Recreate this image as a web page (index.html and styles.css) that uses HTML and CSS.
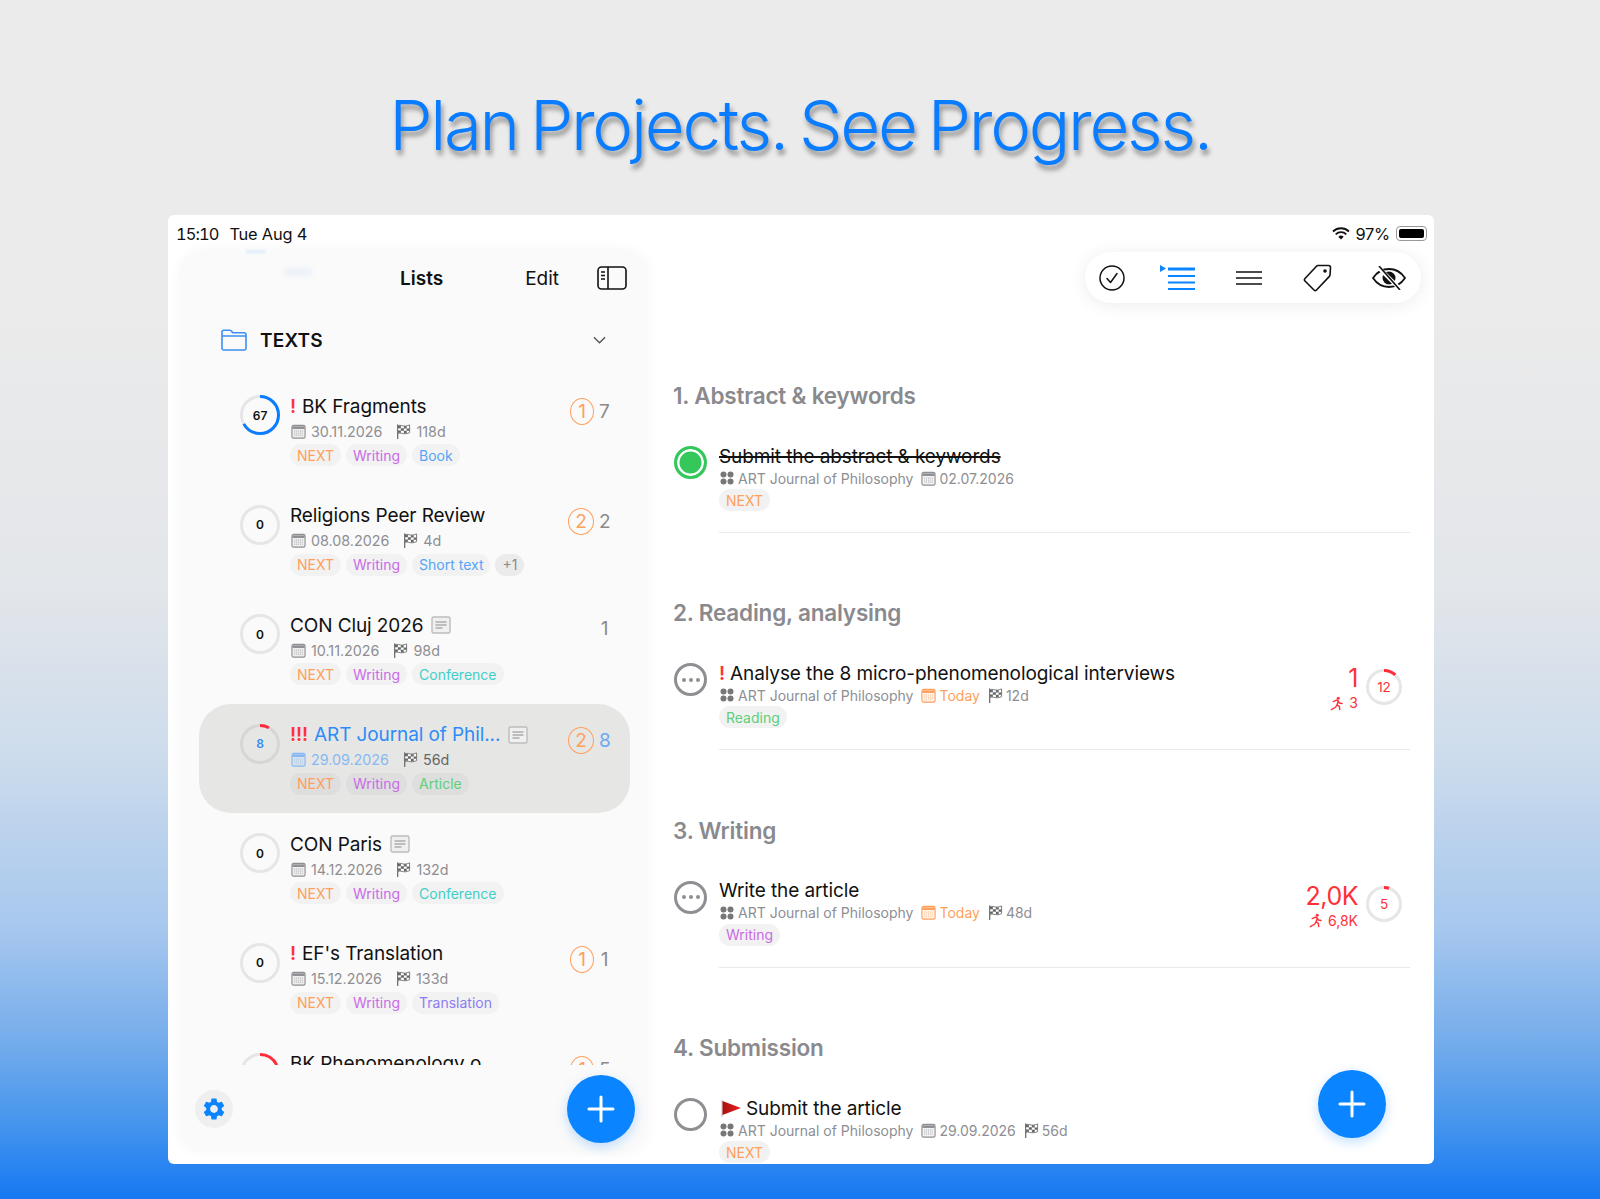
FILE: index.html
```html
<!DOCTYPE html>
<html lang="en">
<head>
<meta charset="UTF-8">
<title>Plan Projects. See Progress.</title>
<link rel="stylesheet" href="styles.css">
</head>
<body>

<!-- icons -->
<svg class="defs" aria-hidden="true">
  <defs>
    <linearGradient id="red-flag" x1="0" x2="1" y1="0" y2="0">
      <stop offset="0" stop-color="#a80f0f"/>
      <stop offset="1" stop-color="#ee2222"/>
    </linearGradient>
  </defs>
  <symbol id="i-cal" viewBox="0 0 16 16">
    <rect x="1" y="1.500" width="14" height="13.500" rx="1.800" fill="currentColor" fill-opacity=".1" stroke="currentColor" stroke-width="1.200"/>
    <path d="M1.500 2.500h13V5.300h-13z" fill="currentColor"/>
    <path d="M3.500 7.500h9M3.500 9.700h9M3.500 11.900h9" stroke="currentColor" stroke-width="1" stroke-dasharray="1 1" opacity=".75"/>
  </symbol>
  <symbol id="i-flag" viewBox="0 0 16 16">
    <path d="M1.800 1v14.500" stroke="currentColor" stroke-width="1.300" stroke-linecap="round"/>
    <path d="M1.800 1.800c3.200-1.200 5.500.9 8.500.4 1.700-.3 3-.8 4.200-1.200v8.200c-1.200.4-2.500 1-4.200 1.200-3 .4-5.300-1.500-8.500-.4z" fill="#fff" stroke="currentColor" stroke-width=".9"/>
    <path d="M2 2h3.200v2.500H2zM8.400 2.300h3v2.600h-3zM5.200 4.500h3.200v2.600H5.200zM11.400 4.700h3v2.500h-3zM2 7h3.200v2.400H2zM8.400 7.100h3v2.700h-3z" fill="currentColor"/>
  </symbol>
  <symbol id="i-note" viewBox="0 0 20 20">
    <rect x="1" y="2" width="18" height="16" rx="1.500" fill="#f0f0f0" stroke="#bdbdbd" stroke-width="1.400"/>
    <path d="M4.500 7h11M4.500 10h11M4.500 13h7" stroke="#8a8a8a" stroke-width="1"/>
  </symbol>
  <symbol id="i-group" viewBox="0 0 14 14">
    <circle cx="3.500" cy="3.500" r="3" fill="currentColor"/>
    <circle cx="10.500" cy="3.500" r="3" fill="currentColor"/>
    <circle cx="3.500" cy="10.500" r="3" fill="currentColor"/>
    <circle cx="10.500" cy="10.500" r="3" fill="currentColor"/>
  </symbol>
  <symbol id="i-run" viewBox="0 0 16 16">
    <circle cx="9.800" cy="2.300" r="1.600" fill="currentColor"/>
    <path d="M4.500 6l3.500-1.500 2 1-1.500 4 2.500 1.500.5 3.500M8.500 9.500L7 12l-4.500 2.500M10 5.500l1 2 3 .5" fill="none" stroke="currentColor" stroke-width="1.500" stroke-linecap="round" stroke-linejoin="round"/>
  </symbol>
</svg>

<h1 class="headline">Plan Projects. See Progress.</h1>

<div class="screen">

  <!-- status bar -->
  <div class="status">
    <span class="time">15:10</span>
    <span class="day">Tue Aug 4</span>
    <svg class="wifi" viewBox="0 0 18 13">
      <path d="M1 4.500a11.500 11.500 0 0 1 16 0M3.700 7.300a7.600 7.600 0 0 1 10.600 0" fill="none" stroke="#111" stroke-width="1.800"/>
      <path d="M6.300 9.700a3.900 3.900 0 0 1 5.400 0L9 12.500z" fill="#111"/>
    </svg>
    <span class="batt-num">97%</span>
    <span class="battery"><span class="battery-fill"></span></span>
  </div>

  <div class="columns">

    <!-- left panel -->
    <aside class="panel">
      <div class="ghost"><i></i><b></b></div>
      <div class="panel-head">
        <span class="panel-title">Lists</span>
        <span class="panel-edit">Edit</span>
        <svg class="panel-toggle" viewBox="0 0 30 24">
          <rect x="1" y="1" width="28" height="22" rx="3.500" fill="none" stroke="#111" stroke-width="1.600"/>
          <path d="M11 1v22" stroke="#111" stroke-width="1.600"/>
          <path d="M4 6h4M4 9.500h4M4 13h4" stroke="#111" stroke-width="1.300"/>
        </svg>
      </div>

      <div class="folder">
        <svg class="folder-icon" viewBox="0 0 26 22">
          <path d="M1 5V3a1.800 1.800 0 0 1 1.800-1.800h6c1 0 1.400.4 2 1.200l1 1.300h11.400A1.800 1.800 0 0 1 25 5.500v13.700a1.800 1.800 0 0 1-1.800 1.800H2.800A1.800 1.800 0 0 1 1 19.200zM1 7h24" fill="none" stroke="#3a8ff0" stroke-width="1.600"/>
        </svg>
        <span class="folder-name">TEXTS</span>
        <svg class="chevron" viewBox="0 0 14 8"><path d="M1 1l6 6 6-6" fill="none" stroke="#555" stroke-width="1.500"/></svg>
      </div>

      <div class="list">

        <div class="row">
          <div class="ring">
            <svg viewBox="0 0 40 40"><circle class="track" cx="20" cy="20" r="18.500"/><circle class="arc blue" cx="20" cy="20" r="18.500" pathLength="100" stroke-dasharray="67 100"/></svg>
            <span>67</span>
          </div>
          <div class="row-body">
            <div class="row-title"><em>!</em> BK Fragments</div>
            <div class="meta">
              <svg class="ic"><use href="#i-cal"/></svg><span>30.11.2026</span>
              <svg class="ic flag"><use href="#i-flag"/></svg><span class="days">118d</span>
            </div>
            <div class="tags"><span class="tag next">NEXT</span><span class="tag writing">Writing</span><span class="tag azure">Book</span></div>
          </div>
          <div class="count"><span class="badge">1</span><span class="num">7</span></div>
        </div>

        <div class="row">
          <div class="ring">
            <svg viewBox="0 0 40 40"><circle class="track" cx="20" cy="20" r="18.500"/></svg>
            <span>0</span>
          </div>
          <div class="row-body">
            <div class="row-title">Religions Peer Review</div>
            <div class="meta">
              <svg class="ic"><use href="#i-cal"/></svg><span>08.08.2026</span>
              <svg class="ic flag"><use href="#i-flag"/></svg><span class="days">4d</span>
            </div>
            <div class="tags"><span class="tag next">NEXT</span><span class="tag writing">Writing</span><span class="tag azure">Short text</span><span class="tag more">+1</span></div>
          </div>
          <div class="count"><span class="badge wide">2</span><span class="num">2</span></div>
        </div>

        <div class="row">
          <div class="ring">
            <svg viewBox="0 0 40 40"><circle class="track" cx="20" cy="20" r="18.500"/></svg>
            <span>0</span>
          </div>
          <div class="row-body">
            <div class="row-title">CON Cluj 2026 <svg class="note"><use href="#i-note"/></svg></div>
            <div class="meta">
              <svg class="ic"><use href="#i-cal"/></svg><span>10.11.2026</span>
              <svg class="ic flag"><use href="#i-flag"/></svg><span class="days">98d</span>
            </div>
            <div class="tags"><span class="tag next">NEXT</span><span class="tag writing">Writing</span><span class="tag teal">Conference</span></div>
          </div>
          <div class="count count-plain"><span class="num">1</span></div>
        </div>

        <div class="row row-active">
          <div class="ring">
            <svg viewBox="0 0 40 40"><circle class="track" cx="20" cy="20" r="18.500"/><circle class="arc red" cx="20" cy="20" r="18.500" pathLength="100" stroke-dasharray="8 100"/></svg>
            <span>8</span>
          </div>
          <div class="row-body">
            <div class="row-title"><em>!!!</em> ART Journal of Phil... <svg class="note"><use href="#i-note"/></svg></div>
            <div class="meta">
              <svg class="ic"><use href="#i-cal"/></svg><span>29.09.2026</span>
              <svg class="ic flag"><use href="#i-flag"/></svg><span class="days">56d</span>
            </div>
            <div class="tags"><span class="tag next">NEXT</span><span class="tag writing">Writing</span><span class="tag green">Article</span></div>
          </div>
          <div class="count"><span class="badge wide">2</span><span class="num">8</span></div>
        </div>

        <div class="row">
          <div class="ring">
            <svg viewBox="0 0 40 40"><circle class="track" cx="20" cy="20" r="18.500"/></svg>
            <span>0</span>
          </div>
          <div class="row-body">
            <div class="row-title">CON Paris <svg class="note"><use href="#i-note"/></svg></div>
            <div class="meta">
              <svg class="ic"><use href="#i-cal"/></svg><span>14.12.2026</span>
              <svg class="ic flag"><use href="#i-flag"/></svg><span class="days">132d</span>
            </div>
            <div class="tags"><span class="tag next">NEXT</span><span class="tag writing">Writing</span><span class="tag teal">Conference</span></div>
          </div>
        </div>

        <div class="row">
          <div class="ring">
            <svg viewBox="0 0 40 40"><circle class="track" cx="20" cy="20" r="18.500"/></svg>
            <span>0</span>
          </div>
          <div class="row-body">
            <div class="row-title"><em>!</em> EF's Translation</div>
            <div class="meta">
              <svg class="ic"><use href="#i-cal"/></svg><span>15.12.2026</span>
              <svg class="ic flag"><use href="#i-flag"/></svg><span class="days">133d</span>
            </div>
            <div class="tags"><span class="tag next">NEXT</span><span class="tag writing">Writing</span><span class="tag violet">Translation</span></div>
          </div>
          <div class="count"><span class="badge">1</span><span class="num">1</span></div>
        </div>

        <div class="row">
          <div class="ring">
            <svg viewBox="0 0 40 40"><circle class="track" cx="20" cy="20" r="18.500"/><circle class="arc red" cx="20" cy="20" r="18.500" pathLength="100" stroke-dasharray="18 100"/></svg>
            <span>18</span>
          </div>
          <div class="row-body">
            <div class="row-title">BK Phenomenology o...</div>
          </div>
          <div class="count"><span class="badge">1</span><span class="num">5</span></div>
        </div>

      </div>

      <div class="panel-foot">
        <button class="gear">
          <svg viewBox="0 0 24 24"><path d="M19.140 12.940c.04-.3.06-.61.06-.94 0-.32-.02-.64-.07-.94l2.030-1.580c.18-.14.23-.41.12-.61l-1.920-3.320c-.12-.22-.37-.29-.59-.22l-2.390.96c-.5-.38-1.030-.7-1.620-.94l-.36-2.540c-.04-.24-.24-.41-.48-.41h-3.840c-.24 0-.43.17-.47.41l-.36 2.540c-.59.24-1.130.57-1.620.94l-2.390-.96c-.22-.08-.47 0-.59.22L2.740 8.870c-.12.21-.08.47.12.61l2.030 1.580c-.05.3-.09.63-.09.94s.02.64.07.94l-2.030 1.580c-.18.14-.23.41-.12.61l1.920 3.320c.12.22.37.29.59.22l2.390-.96c.5.38 1.030.7 1.620.94l.36 2.540c.05.24.24.41.48.41h3.840c.24 0 .44-.17.47-.41l.36-2.540c.59-.24 1.130-.56 1.620-.94l2.390.96c.22.08.47 0 .59-.22l1.920-3.320c.12-.22.07-.47-.12-.61l-2.010-1.580zM12 15.600c-1.980 0-3.600-1.620-3.600-3.600s1.620-3.600 3.600-3.600 3.600 1.620 3.600 3.600-1.620 3.600-3.600 3.600z" fill="#0a84ff"/></svg>
        </button>
        <button class="fab"><svg viewBox="0 0 28 28"><path d="M14 2v24M2 14h24" stroke="#fff" stroke-width="3" stroke-linecap="round"/></svg></button>
      </div>
    </aside>

    <!-- project detail -->
    <main class="detail">
      <div class="toolbar-wrap">
        <div class="toolbar">
          <svg class="tool" viewBox="0 0 26 26"><circle cx="13" cy="13" r="12" fill="none" stroke="#111" stroke-width="1.500"/><path d="M8 13.500l3.500 4L18 8.500" fill="none" stroke="#111" stroke-width="1.500" stroke-linecap="round" stroke-linejoin="round"/></svg>
          <svg class="tool tool-list" viewBox="0 0 36 26"><path d="M0 0l6 3.500L0 7z" fill="#0a84ff"/><path d="M8 4h27" stroke="#0a84ff" stroke-width="3"/><path d="M8 11h27M8 17.500h27M8 24h27" stroke="#0a84ff" stroke-width="1.800"/></svg>
          <svg class="tool tool-menu" viewBox="0 0 26 14"><path d="M0 1h26M0 7h26M0 13h26" stroke="#111" stroke-width="1.700"/></svg>
          <svg class="tool tool-tag" viewBox="0 0 30 28"><path d="M15 1.500h10.500a2 2 0 0 1 2 2L27 11a2 2 0 0 1-.6 1.400L13.500 26a1.800 1.800 0 0 1-2.500 0L2 17a1.800 1.800 0 0 1 0-2.500L13.500 2.200c.4-.4.900-.7 1.500-.7z" fill="none" stroke="#111" stroke-width="1.600" stroke-linejoin="round"/><circle cx="22" cy="7" r="1.800" fill="#111"/></svg>
          <svg class="tool tool-eye" viewBox="0 0 34 24"><path d="M1 12C5 6 10.500 3 17 3s12 3 16 9c-4 6-9.500 9-16 9S5 18 1 12z" fill="none" stroke="#111" stroke-width="1.800"/><circle cx="17" cy="12" r="6.500" fill="#111"/><path d="M6 1l22 22" stroke="#fff" stroke-width="4"/><path d="M7 0l21 24" stroke="#111" stroke-width="1.600"/></svg>
        </div>
      </div>

      <section class="group">
        <h2 class="group-name">1. Abstract &amp; keywords</h2>
        <div class="task">
          <span class="check done"></span>
          <div class="task-body">
            <div class="task-title"><s>Submit the abstract &amp; keywords</s></div>
            <div class="meta task-meta">
              <svg class="ic dots"><use href="#i-group"/></svg><span>ART Journal of Philosophy</span>
              <svg class="ic gap"><use href="#i-cal"/></svg><span>02.07.2026</span>
            </div>
            <div class="tags"><span class="tag next">NEXT</span></div>
          </div>
        </div>
      </section>

      <section class="group">
        <h2 class="group-name">2. Reading, analysing</h2>
        <div class="task">
          <span class="check waiting"><i></i><i></i><i></i></span>
          <div class="task-body">
            <div class="task-title"><em>!</em> Analyse the 8 micro-phenomenological interviews</div>
            <div class="meta task-meta">
              <svg class="ic dots"><use href="#i-group"/></svg><span>ART Journal of Philosophy</span>
              <svg class="ic gap today"><use href="#i-cal"/></svg><span class="today">Today</span>
              <svg class="ic flag"><use href="#i-flag"/></svg><span class="days">12d</span>
            </div>
            <div class="tags"><span class="tag green">Reading</span></div>
          </div>
          <div class="effort">
            <div class="effort-nums"><span class="effort-big">1</span><span class="effort-small"><svg class="run"><use href="#i-run"/></svg>3</span></div>
            <div class="ring ring-small">
              <svg viewBox="0 0 36 36"><circle class="track" cx="18" cy="18" r="16.500"/><circle class="arc red" cx="18" cy="18" r="16.500" pathLength="100" stroke-dasharray="12 100"/></svg>
              <span>12</span>
            </div>
          </div>
        </div>
      </section>

      <section class="group">
        <h2 class="group-name">3. Writing</h2>
        <div class="task">
          <span class="check waiting"><i></i><i></i><i></i></span>
          <div class="task-body">
            <div class="task-title">Write the article</div>
            <div class="meta task-meta">
              <svg class="ic dots"><use href="#i-group"/></svg><span>ART Journal of Philosophy</span>
              <svg class="ic gap today"><use href="#i-cal"/></svg><span class="today">Today</span>
              <svg class="ic flag"><use href="#i-flag"/></svg><span class="days">48d</span>
            </div>
            <div class="tags"><span class="tag writing">Writing</span></div>
          </div>
          <div class="effort">
            <div class="effort-nums"><span class="effort-big">2,0K</span><span class="effort-small"><svg class="run"><use href="#i-run"/></svg>6,8K</span></div>
            <div class="ring ring-small">
              <svg viewBox="0 0 36 36"><circle class="track" cx="18" cy="18" r="16.500"/><circle class="arc red" cx="18" cy="18" r="16.500" pathLength="100" stroke-dasharray="5 100"/></svg>
              <span>5</span>
            </div>
          </div>
        </div>
      </section>

      <section class="group">
        <h2 class="group-name">4. Submission</h2>
        <div class="task">
          <span class="check"></span>
          <div class="task-body">
            <div class="task-title"><svg class="red-flag" viewBox="0 0 22 18"><path d="M1 0v18" stroke="#b9b9b9" stroke-width="1"/><path d="M1.500 1L21 8.500 1.500 16z" fill="url(#red-flag)"/></svg>Submit the article</div>
            <div class="meta task-meta">
              <svg class="ic dots"><use href="#i-group"/></svg><span>ART Journal of Philosophy</span>
              <svg class="ic gap"><use href="#i-cal"/></svg><span>29.09.2026</span>
              <svg class="ic flag"><use href="#i-flag"/></svg><span class="days">56d</span>
            </div>
            <div class="tags"><span class="tag next">NEXT</span></div>
          </div>
        </div>
      </section>

      <button class="fab fab-main"><svg viewBox="0 0 28 28"><path d="M14 2v24M2 14h24" stroke="#fff" stroke-width="3" stroke-linecap="round"/></svg></button>
    </main>
  </div>
</div>

</body>
</html>
```

FILE: styles.css
```css
* { box-sizing: border-box; }

body {
  margin: 0;
  height: 1199px;
  overflow: hidden;
  font-family: Inter, "Noto Sans", sans-serif;
  color: #111;
  background: linear-gradient(#ebebeb 0, #ebebeb 25%, #e3e6ea 49%, #cddcec 63%, #a6c7ee 77.600%, #74aceb 87%, #4394ee 94%, #1578f2 100%);
}

.defs { position: absolute; width: 0; height: 0; }

/* Titulo */
.headline {
  margin: 0;
  height: 215px;
  padding-top: 85px;
  text-align: center;
  font-size: 69px;
  line-height: 80px;
  font-weight: 300;
  letter-spacing: -2.3px;
  word-spacing: -5px;
  color: #0a7cff;
  text-shadow: 2px 5px 5px rgba(0,0,0,0.4);
}

/* Tela */
.screen {
  position: relative;
  margin: 0 166px 0 168px;
  height: 949px;
  background: #fff;
  border-radius: 6px;
  overflow: hidden;
}

.status {
  height: 35px;
  padding: 2px 7px 0 8px;
  display: flex;
  align-items: center;
  font-size: 16.4px;
  letter-spacing: -0.2px;
}
.time { font-variant-numeric: tabular-nums; letter-spacing: -0.9px; }
.day { margin-left: 11px; }
.wifi { width: 18px; height: 13px; margin-left: auto; }
.batt-num { margin-left: 5px; }
.battery {
  width: 31px;
  height: 15px;
  margin-left: 6px;
  padding: 2px;
  border: 1px solid #999;
  border-radius: 4px;
}
.battery-fill { display: block; width: 100%; height: 100%; background: #000; border-radius: 2px; }

.columns { display: flex; height: 914px; }

/* Painel */
.panel {
  position: relative;
  flex: none;
  width: 468px;
  height: 902px;
  margin-left: 12px;
  background: #fafafa;
  border-radius: 24px;
  box-shadow: 0 0 14px rgba(0,0,0,0.04);
}
.ghost { position: absolute; top: 0; left: 60px; filter: blur(1.5px); opacity: 0.12; }
.ghost i { display: block; width: 20px; height: 3px; margin-left: 6px; background: #0a84ff; }
.ghost b { display: block; width: 28px; height: 10px; margin: 14px 0 0 44px; background: #a9c6f0; }

.panel-head {
  position: relative;
  height: 56px;
  padding: 0 21px 0 220px;
  display: flex;
  align-items: center;
  font-size: 19px;
}
.panel-title { font-weight: 600; }
.panel-edit { margin-left: auto; }
.panel-toggle { width: 30px; height: 24px; margin-left: 38px; }

.folder {
  height: 36px;
  margin: 16px 0 17px;
  padding: 0 42px 0 41px;
  display: flex;
  align-items: center;
}
.folder-icon { width: 26px; height: 22px; }
.folder-name { margin-left: 13px; font-size: 19px; font-weight: 600; letter-spacing: 0.2px; }
.chevron { width: 13px; height: 8px; margin-left: auto; }

.list { height: 690px; margin: 0 18px 0 19px; overflow: hidden; }

.row {
  height: 109.6px;
  padding: 19px 20px 0 41px;
  display: flex;
  align-items: flex-start;
  border-radius: 32px;
}
.row-active { background: #e6e6e4; }
.row-active .row-title { color: #2f8cf5; }
.row-active .tag { background: #dedede; }
.row-active .meta > span:first-of-type { color: #86b9f3; }
.row-active .meta .ic:first-child { color: #86b9f3; }
.row-active .ring span { color: #2f8cf5; }
.row-active .num { color: #6aa9f0; }
.row-active .days { color: #666; }
.row-active .track { stroke: #d6d6d6; }

.ring {
  flex: none;
  width: 40px;
  height: 40px;
  margin-top: 1px;
  display: grid;
  place-items: center;
  font-size: 12px;
  font-weight: 600;
}
.ring > * { grid-area: 1 / 1; }
.ring svg { width: 100%; height: 100%; transform: rotate(-90deg); }
.track { fill: none; stroke: #e6e6e6; stroke-width: 3; }
.arc { fill: none; stroke-width: 3; }
.blue { stroke: #0a7cff; }
.red { stroke: #ff2d3a; }

.row-body { flex: 1; min-width: 0; margin-left: 10px; }
.row-title {
  display: flex;
  align-items: center;
  gap: 6px;
  height: 24px;
  font-size: 19px;
  white-space: nowrap;
  letter-spacing: -0.1px;
}
em { font-style: normal; font-weight: 600; color: #ff3038; }
.note { width: 20px; height: 20px; margin-left: 2px; }

.meta {
  display: flex;
  align-items: center;
  height: 18px;
  margin-top: 4px;
  font-size: 14.3px;
  color: #8e8e93;
  white-space: nowrap;
}
.ic { width: 15px; height: 15px; margin: 0 5px 0 1px; flex: none; color: #8e8e93; }
.ic.flag { margin-left: 14px; color: #666; }

.tags { display: flex; gap: 5px; margin-top: 4px; }
.tag {
  height: 22px;
  padding: 0 7px;
  display: flex;
  align-items: center;
  font-size: 14px;
  background: #f2f2f2;
  border-radius: 11px;
}
.next { color: #ff9f5c; }
.writing { color: #c96be6; }
.azure { color: #56a5f5; }
.teal { color: #3fcfc8; }
.green { color: #5fcf7a; }
.violet { color: #8d7cf0; }
.more { color: #8a8a8a; background: #ebebeb; }

.count {
  flex: none;
  height: 27px;
  margin-top: 4px;
  display: flex;
  align-items: center;
  gap: 5px;
  font-size: 19px;
  color: #8a8a8a;
}
.count-plain { margin-top: 2px; }
.num { width: 11px; text-align: center; }
.badge {
  width: 24px;
  height: 27px;
  display: grid;
  place-items: center;
  color: #ff9f5c;
  border: 1.5px solid #ff9f5c;
  border-radius: 50%;
}
.badge.wide { width: 26px; }

.panel-foot {
  height: 87px;
  padding: 10px 13px 9px 15px;
  display: flex;
  align-items: center;
  justify-content: space-between;
}
.gear {
  width: 38px;
  height: 38px;
  padding: 6px;
  border: none;
  border-radius: 50%;
  background: #efefef;
}
.gear svg { display: block; width: 100%; height: 100%; }
.fab {
  width: 68px;
  height: 68px;
  padding: 20px;
  border: none;
  border-radius: 50%;
  background: #0a84ff;
  box-shadow: 0 4px 12px rgba(10,132,255,0.25);
}
.fab svg { display: block; width: 100%; height: 100%; }
.fab-main { position: absolute; left: 1150px; top: 855px; }

/* Detalhe */
.detail { flex: 1; min-width: 0; padding: 2px 13px 0 25px; }

.toolbar-wrap { display: flex; justify-content: flex-end; margin-bottom: 78px; }
.toolbar {
  width: 336px;
  height: 51px;
  padding: 0 15px 0 14px;
  display: flex;
  align-items: center;
  background: #fff;
  border-radius: 26px;
  box-shadow: 0 2px 18px rgba(0,0,0,0.08);
}
.tool { width: 26px; height: 26px; flex: none; }
.tool-list { width: 36px; margin-left: 35px; }
.tool-menu { width: 26px; height: 14px; margin-left: 40px; }
.tool-tag { width: 30px; height: 28px; margin-left: 41px; }
.tool-eye { width: 34px; height: 24px; margin-left: 39px; }

.group { height: 217.4px; }
.group-name {
  margin: 0 0 33px;
  height: 30px;
  font-size: 22.5px;
  line-height: 30px;
  font-weight: 600;
  letter-spacing: -0.2px;
  color: #8a8a8e;
}

.task {
  display: flex;
  align-items: flex-start;
  padding-bottom: 22px;
  position: relative;
}
.task::after {
  content: "";
  position: absolute;
  left: 46px;
  right: 11px;
  bottom: 0;
  height: 1px;
  background: #e9e9e9;
}
.group:last-of-type .task::after { display: none; }

.check {
  flex: none;
  width: 33px;
  height: 33px;
  margin: 2px 12px 0 1px;
  display: flex;
  align-items: center;
  justify-content: center;
  gap: 3px;
  border: 3px solid #8e8e93;
  border-radius: 50%;
}
.check i { width: 4px; height: 4px; background: #8e8e93; border-radius: 50%; }
.done {
  border-color: #34c759;
  background: #34c759;
  box-shadow: inset 0 0 0 2.5px #fff;
}

.task-body { flex: 1; min-width: 0; }
.task-title {
  display: flex;
  align-items: center;
  gap: 5px;
  height: 24px;
  font-size: 19px;
  letter-spacing: -0.1px;
  white-space: nowrap;
}
.task-title s { text-decoration-thickness: 1.5px; }
.red-flag { width: 21px; height: 17px; flex: none; margin: 0 -1px 0 2px; }

.task-meta { margin-top: 1px; font-size: 14px; }
.task-meta + .tags { margin-top: 2px; }
.task-meta .ic.dots { width: 14px; height: 14px; margin: 0 4px 0 1px; color: #777; }
.task-meta .ic.gap { margin: 0 3px 0 8px; }
.task-meta .ic.flag { margin: 0 3px 0 8px; }
.ic.today, .today { color: #ff9f5c; }
.task-meta .ic.today { color: #ff9f5c; }

.effort {
  flex: none;
  display: flex;
  align-items: center;
  gap: 8px;
  margin: 2px 19px 0 0;
  color: #ff3038;
}
.effort-nums { display: flex; flex-direction: column; align-items: flex-end; }
.effort-big { font-size: 25px; line-height: 30px; letter-spacing: -0.5px; }
.effort-small { display: flex; align-items: center; gap: 5px; margin-top: 1px; font-size: 14px; line-height: 18px; }
.run { width: 15px; height: 15px; }
.ring-small { width: 36px; height: 36px; margin: -2px 0 0; font-size: 13.5px; font-weight: 400; }
```
